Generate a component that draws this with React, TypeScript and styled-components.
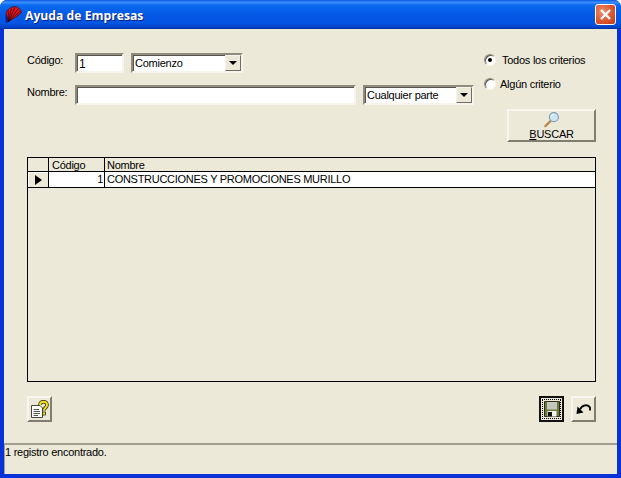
import React from 'react';
import styled, { createGlobalStyle } from 'styled-components';

const GlobalStyle = createGlobalStyle`
    html, body {
        margin: 0;
        padding: 0;
        width: 621px;
        height: 478px;
        overflow: hidden;
    }
    * {
        box-sizing: border-box;
    }
`;

const Window = styled.div`
    width: 621px;
    height: 478px;
    display: flex;
    flex-direction: column;
    font-family: 'Liberation Sans', Arial, sans-serif;
    font-size: 11px;
    letter-spacing: -0.25px;
    color: #000;
    background: #0831d9;
    border-radius: 7px 7px 0 0;
    overflow: hidden;
`;

const TitleBar = styled.div`
    height: 29px;
    flex: none;
    display: flex;
    align-items: center;
    padding: 0 5px 0 5px;
    background: linear-gradient(
        to bottom,
        #0a5be0 0%,
        #3c8efb 8%,
        #0a6af0 18%,
        #0459e6 50%,
        #0355e2 80%,
        #0342c8 94%,
        #02319f 100%
    );
`;

const TitleText = styled.div`
    margin-left: 3px;
    padding-top: 2px;
    flex: 1;
    font-family: 'Open Sans', 'DejaVu Sans', sans-serif;
    font-size: 12.2px;
    font-weight: 700;
    letter-spacing: 0;
    color: #fff;
    text-shadow: 1px 1px 0 #0f1e7e;
`;

const CloseButton = styled.div`
    width: 21px;
    height: 21px;
    display: flex;
    align-items: center;
    justify-content: center;
    border: 1px solid #fff;
    border-radius: 3px;
    background: radial-gradient(circle at 35% 35%, #ee9270 0%, #dc5b34 50%, #c23a15 100%);
`;

const Body = styled.div`
    flex: 1;
    margin: 0 4px 4px 4px;
    display: flex;
    flex-direction: column;
    background: #ece9d8;
    min-height: 0;
`;

const Content = styled.div`
    flex: 1;
    display: flex;
    flex-direction: column;
    padding: 24px 21px 0 23px;
`;

const TopArea = styled.div`
    height: 104px;
    display: flex;
    justify-content: space-between;
`;

const FormColumn = styled.div`
    display: flex;
    flex-direction: column;
    gap: 12px;
`;

const FormRow = styled.div`
    display: flex;
    align-items: flex-start;
`;

const FieldLabel = styled.label`
    width: 48px;
    padding-top: 1px;
    flex: none;
`;

const sunken = `
    border-style: solid;
    border-width: 2px;
    border-color: #8f8c7d #f6f4ec #f6f4ec #8f8c7d;
    box-shadow: inset 1px 1px 0 #57564c;
    background: #fff;
`;

const TextInput = styled.div<{ $width: number }>`
    ${sunken}
    width: ${({ $width }) => $width}px;
    height: 20px;
    padding: 2px 0 0 2px;
    line-height: 14px;
    font-size: 12px;
`;

const Select = styled.div<{ $width: number; $gap: number }>`
    ${sunken}
    width: ${({ $width }) => $width}px;
    height: 20px;
    margin-left: ${({ $gap }) => $gap}px;
    display: flex;
    align-items: center;
    justify-content: space-between;
    padding-left: 2px;
`;

const Arrow = styled.div`
    width: 16px;
    height: 16px;
    display: flex;
    align-items: center;
    justify-content: center;
    background: #ece9d8;
    border-style: solid;
    border-width: 1px;
    border-color: #f6f4ec #6f6d62 #6f6d62 #f6f4ec;
    &::after {
        content: '';
        border-style: solid;
        border-width: 4px 4px 0 4px;
        border-color: #000 transparent transparent transparent;
    }
`;

const SideColumn = styled.div`
    width: 115px;
    display: flex;
    flex-direction: column;
    align-items: flex-start;
`;

const RadioRow = styled.div<{ $gap: number; $mb: number }>`
    display: flex;
    align-items: center;
    height: 13px;
    gap: ${({ $gap }) => $gap}px;
    margin-bottom: ${({ $mb }) => $mb}px;
    margin-left: 3px;
`;

const RadioDot = styled.div<{ $checked?: boolean }>`
    width: 12px;
    height: 12px;
    flex: none;
    border-radius: 50%;
    background: #fff;
    border: 1px solid;
    border-color: #8f8c7d #f6f4ec #f6f4ec #8f8c7d;
    box-shadow: inset 1px 1px 0 #57564c;
    display: flex;
    align-items: center;
    justify-content: center;
    &::after {
        content: '';
        width: 4px;
        height: 4px;
        border-radius: 50%;
        background: ${({ $checked }) => ($checked ? '#000' : 'transparent')};
    }
`;

const SearchButton = styled.div`
    width: 89px;
    height: 33px;
    margin: 0 0 0 26px;
    display: flex;
    flex-direction: column;
    align-items: center;
    padding-top: 0;
    background: #ece9d8;
    border-style: solid;
    border-width: 2px;
    border-color: #f8f6ee #807e70 #807e70 #f8f6ee;
    line-height: 12px;
    svg {
        display: block;
    }
`;

const Underlined = styled.span`
    text-decoration: underline;
`;

const Grid = styled.div`
    height: 225px;
    flex: none;
    border: 1px solid #000;
    background: #ece9d8;
`;

const GridHeader = styled.div`
    display: flex;
    height: 14px;
    line-height: 15px;
    border-bottom: 1px solid #000;
`;

const GridRow = styled.div`
    display: flex;
    height: 16px;
    line-height: 14px;
    background: #fff;
    border-bottom: 1px solid #000;
`;

const IndicatorCell = styled.div<{ $body?: boolean }>`
    width: 21px;
    flex: none;
    border-right: 1px solid #000;
    background: #ece9d8;
    display: flex;
    align-items: center;
    justify-content: center;
    ${({ $body }) => ($body ? 'box-shadow: inset 1px 1px 0 #fff;' : '')}
`;

const RowMarker = styled.div`
    border-style: solid;
    border-width: 5px 0 5px 7px;
    border-color: transparent transparent transparent #000;
    margin-left: 1px;
`;

const CodeCell = styled.div<{ $right?: boolean }>`
    width: 56px;
    flex: none;
    padding: 0 1px 0 3px;
    border-right: 1px solid #000;
    text-align: ${({ $right }) => ($right ? 'right' : 'left')};
`;

const NameCell = styled.div`
    flex: 1;
    padding-left: 2px;
    white-space: nowrap;
`;

const RecordName = styled.span`
    letter-spacing: -0.28px;
`;

const Footer = styled.div`
    margin-top: 14px;
    display: flex;
    justify-content: space-between;
`;

const FooterGroup = styled.div`
    display: flex;
    gap: 7px;
`;

const IconButton = styled.div<{ $focused?: boolean }>`
    width: 25px;
    height: 26px;
    display: flex;
    align-items: center;
    justify-content: center;
    background: #ece9d8;
    border-style: solid;
    border-width: 2px;
    border-color: ${({ $focused }) =>
        $focused ? '#111' : '#f8f6ee #807e70 #807e70 #f8f6ee'};
    ${({ $focused }) => ($focused ? 'outline: 1px dotted #000; outline-offset: -4px;' : '')}
`;

const StatusBar = styled.div`
    height: 31px;
    flex: none;
    padding: 0;
    line-height: 14px;
    border-style: solid;
    border-width: 2px 0 0 1px;
    border-color: #a09e8e;
`;

const FanIcon = () => (
    <svg width="17" height="17" viewBox="0 0 17 17">
        <path d="M0.5 16.5 L0.5 9 L3 9 L6 14 L2.5 16.5 Z" fill="#0d1f9a" />
        <path d="M3.5 15.5 L1 7 C2 3 7 0.5 10.5 0.5 C13.5 1 15.5 3 16.5 6.5 L11 11 Z" fill="#e0141f" />
        <path
            d="M3.5 15.5 L3.2 4.5 M3.5 15.5 L6.4 2.4 M3.5 15.5 L10 1.2 M3.5 15.5 L13.4 2.6 M3.5 15.5 L15.6 5"
            stroke="#2a0609"
            strokeWidth="0.7"
        />
        <path d="M3.5 15.5 L1 7 C2 3 7 0.5 10.5 0.5 C13.5 1 15.5 3 16.5 6.5 L11 11 Z" fill="none" stroke="#2a0609" strokeWidth="0.6" />
    </svg>
);

const CloseIcon = () => (
    <svg width="13" height="13" viewBox="0 0 13 13">
        <path d="M2 2 L11 11 M11 2 L2 11" stroke="#fff" strokeWidth="2.4" />
    </svg>
);

const MagnifierIcon = () => (
    <svg width="18" height="18" viewBox="0 0 18 18">
        <path d="M2 16 L8 10" stroke="#b8874c" strokeWidth="2.4" strokeLinecap="round" />
        <circle cx="11" cy="6.5" r="4.8" fill="#c9e4ee" stroke="#7e9eb5" strokeWidth="1.2" />
        <path d="M8.5 6 A3 3 0 0 1 11 3.5" stroke="#fff" strokeWidth="1" fill="none" />
    </svg>
);

const HelpIcon = () => (
    <svg width="19" height="19" viewBox="0 0 19 19">
        <path d="M1.5 5.5 H10 L12.5 8 V17.5 H1.5 Z" fill="#fff" stroke="#444" strokeWidth="1" />
        <path d="M3.5 9.5 H9 M3.5 11.5 H10 M3.5 13.5 H10 M3.5 15.5 H8" stroke="#555" strokeWidth="1" />
        <path d="M10 5 C10 0.5 17 0.5 17 5 C17 8 14 7.5 14 10.5" fill="none" stroke="#33301a" strokeWidth="3.6" />
        <path d="M10 5 C10 0.5 17 0.5 17 5 C17 8 14 7.5 14 10.5" fill="none" stroke="#f4e01c" strokeWidth="2" />
        <rect x="12.5" y="12" width="3" height="3" fill="#f4e01c" stroke="#33301a" strokeWidth="0.8" />
    </svg>
);

const SaveIcon = () => (
    <svg width="16" height="16" viewBox="0 0 16 16">
        <path d="M0.5 0.5 H15.5 V15.5 H0.5 Z" fill="#6a7a3c" stroke="#2c2f18" strokeWidth="1" />
        <rect x="3" y="1" width="10" height="7.5" fill="#c6c6c0" />
        <rect x="3.5" y="10" width="9" height="5.5" fill="#f2f2ee" />
        <rect x="4" y="11" width="4" height="4.5" fill="#111" />
    </svg>
);

const UndoIcon = () => (
    <svg width="16" height="12" viewBox="0 0 16 12">
        <path d="M4 6.5 C6 1.5 12 1 14 4.5 L14 7.5" fill="none" stroke="#000" strokeWidth="1.8" />
        <path d="M0.5 11 L1.5 3.5 L7.5 9.5 Z" fill="#000" />
    </svg>
);

export default function App() {
    return (
        <Window>
            <GlobalStyle />

            <TitleBar>
                <FanIcon />
                <TitleText>Ayuda de Empresas</TitleText>
                <CloseButton>
                    <CloseIcon />
                </CloseButton>
            </TitleBar>

            <Body>
                <Content>
                    <TopArea>
                        <FormColumn>
                            <FormRow>
                                <FieldLabel>Código:</FieldLabel>
                                <TextInput $width={49}>1</TextInput>
                                <Select $width={112} $gap={7}>
                                    Comienzo
                                    <Arrow />
                                </Select>
                            </FormRow>
                            <FormRow>
                                <FieldLabel>Nombre:</FieldLabel>
                                <TextInput $width={281} />
                                <Select $width={111} $gap={7}>
                                    Cualquier parte
                                    <Arrow />
                                </Select>
                            </FormRow>
                        </FormColumn>

                        <SideColumn>
                            <RadioRow $gap={6} $mb={11}>
                                <RadioDot $checked />
                                Todos los criterios
                            </RadioRow>
                            <RadioRow $gap={4} $mb={19}>
                                <RadioDot />
                                Algún criterio
                            </RadioRow>
                            <SearchButton>
                                <MagnifierIcon />
                                <span>
                                    <Underlined>B</Underlined>USCAR
                                </span>
                            </SearchButton>
                        </SideColumn>
                    </TopArea>

                    <Grid>
                        <GridHeader>
                            <IndicatorCell />
                            <CodeCell>Código</CodeCell>
                            <NameCell>Nombre</NameCell>
                        </GridHeader>
                        <GridRow>
                            <IndicatorCell $body>
                                <RowMarker />
                            </IndicatorCell>
                            <CodeCell $right>1</CodeCell>
                            <NameCell>
                                <RecordName>CONSTRUCCIONES Y PROMOCIONES MURILLO</RecordName>
                            </NameCell>
                        </GridRow>
                    </Grid>

                    <Footer>
                        <IconButton>
                            <HelpIcon />
                        </IconButton>
                        <FooterGroup>
                            <IconButton $focused>
                                <SaveIcon />
                            </IconButton>
                            <IconButton>
                                <UndoIcon />
                            </IconButton>
                        </FooterGroup>
                    </Footer>
                </Content>

                <StatusBar>1 registro encontrado.</StatusBar>
            </Body>
        </Window>
    );
}
